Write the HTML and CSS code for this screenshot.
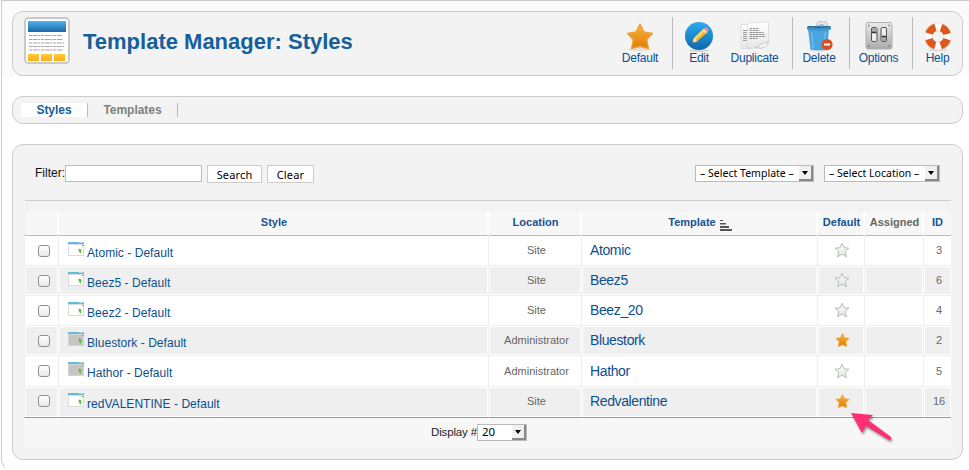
FILE: index.html
```html
<!DOCTYPE html>
<html lang="en">
<head>
<meta charset="utf-8">
<title>Template Manager: Styles</title>
<link rel="stylesheet" href="styles.css">
</head>
<body>
<svg class="defs" width="0" height="0" aria-hidden="true">
  <defs>
    <linearGradient id="gold" x1="0" y1="0" x2="0" y2="1"><stop offset="0" stop-color="#f9b53c"/><stop offset="1" stop-color="#e07c06"/></linearGradient>
    <linearGradient id="blue" x1="0" y1="0" x2="0" y2="1"><stop offset="0" stop-color="#2eaaf0"/><stop offset="1" stop-color="#0c68ab"/></linearGradient>
    <linearGradient id="banner" x1="0" y1="0" x2="0" y2="1"><stop offset="0" stop-color="#52b3f0"/><stop offset="1" stop-color="#1767a5"/></linearGradient>
    <linearGradient id="amber" x1="0" y1="0" x2="0" y2="1"><stop offset="0" stop-color="#fdcb3c"/><stop offset="1" stop-color="#fbae17"/></linearGradient>
    <linearGradient id="steel" x1="0" y1="0" x2="0" y2="1"><stop offset="0" stop-color="#ececec"/><stop offset="1" stop-color="#a9a9a9"/></linearGradient>
    <linearGradient id="page" x1="0" y1="0" x2="0" y2="1"><stop offset="0" stop-color="#ffffff"/><stop offset="1" stop-color="#e6e6e6"/></linearGradient>
    <linearGradient id="pale" x1="0" y1="0" x2="0" y2="1"><stop offset="0" stop-color="#ffffff"/><stop offset="1" stop-color="#dfe5de"/></linearGradient>
    <symbol id="star" viewBox="0 0 16 16"><path d="M8 1.200 10 5.700 15 6.200 11.200 9.400 12.400 14.800 8 12.100 3.600 14.800 4.800 9.400 1 6.200 6 5.700Z" fill="url(#pale)" stroke="#b3c2b1" stroke-width="1"/></symbol>
    <symbol id="star-on" viewBox="0 0 16 16"><path d="M8.500 1.700 10.500 5.800 15 6.400 11.800 9.600 12.500 14.400 8.500 12.800 4.500 14.400 5.200 9.600 2 6.400 6.500 5.800Z" fill="url(#gold)" stroke="#f2a22e" stroke-width=".9" stroke-linejoin="round"/></symbol>
    <symbol id="site" viewBox="0 0 16 14"><path d="M0 0h16v14H0z" fill="#dcdcdc"/><path d="M1 3h14v10H1z" fill="#fff"/><path d="M0 0h16v2H0z" fill="#63bbdc"/><path d="M11 0h4v1h-4z" fill="#b2dff0"/><path d="m10.500 6.400 1.400.7 1 .2.800 1.400-1 1 .7 2-1.500-.8-1.200-2.200Z" fill="#57bb2f"/><path d="M14 3h2v1h-2z" fill="#79be60"/></symbol>
    <symbol id="admin" viewBox="0 0 16 14"><path d="M0 0h16v14H0z" fill="#d5d5d5"/><path d="M1 3h14v10H1z" fill="#c5c5c5"/><path d="M0 0h16v2H0z" fill="#63bbdc"/><path d="M11 0h4v1h-4z" fill="#b2dff0"/><path d="m10.500 6.400 1.400.7 1 .2.800 1.400-1 1 .7 2-1.500-.8-1.200-2.200Z" fill="#57bb2f"/><path d="M14 3h2v1h-2z" fill="#79be60"/></symbol>
  </defs>
</svg>
<div class="frame">
  <header class="top">
    <div class="panel titlebar">
      <svg class="logo" width="46" height="48" viewBox="0 0 46 48"><rect x="1" y="1" width="44" height="45" rx="3.500" fill="#fff" stroke="#c9c9c9" stroke-width="2"/><path d="M4 4h38v11H4z" fill="url(#banner)"/><path d="M5 18.500h33M5 22.500h34M5 26h36M5 29.500h35M5 33h34" stroke="#a5a5a5" stroke-width="1.100" stroke-dasharray="3 .7 5 .6 2 .8"/><path d="M4 37h11v7H4zM17 37h11v7H17zM30 37h11v7H30z" fill="url(#amber)"/></svg>
      <h1>Template Manager: Styles</h1>
      <nav class="toolbar">
        <a class="tool t-default"><svg width="32" height="32" viewBox="0 0 32 32"><ellipse cx="16" cy="28.500" rx="12" ry="1.500" fill="#ddd"/><path d="M16 3 20 11 28.500 12.500 22.800 18.500 24.500 27.500 16 25.500 7.500 27.500 9.200 18.500 3.500 12.500 12 11Z" fill="url(#gold)" stroke="#eda13b" stroke-width="1.300" stroke-linejoin="round"/></svg><span>Default</span></a>
        <a class="tool sep t-edit"><svg width="32" height="32" viewBox="0 0 32 32"><ellipse cx="16" cy="29.500" rx="10" ry="1.500" fill="#d5d5d5"/><circle cx="16" cy="15" r="14" fill="url(#blue)"/><path d="m9 22 2-5L20.500 8l3.500 3.500L14 20.500Z" fill="#fcb42a"/><path d="m11 17 9.500-9 1.500 1.500L12.200 19Z" fill="#ffdc62"/><path d="m19.500 9 1.500-1.500 3.500 3.500L23 12.500Z" fill="#ddd"/><path d="m21 7.500 1.500-1.200Q24 6 25 7.500t.5 2.500L24.500 11Z" fill="#ef8f79"/><path d="m9 22 2-5 3 3.500Z" fill="#f2dfb9"/><path d="m9 22 .8-2 1.200 1.200Z" fill="#333"/></svg><span>Edit</span></a>
        <a class="tool t-dup"><svg width="32" height="32" viewBox="0 0 32 32"><path d="M2 3.500h12v24H2z" fill="url(#page)" stroke="#ddd"/><path d="M4 9.500h5M4 11.500h4M4 13.500h5M4 15.500h4M4 17.500h5M4 19.500h4" stroke="#999"/><path d="m8.500 2 21-1v21l-7 5H7.500Z" fill="url(#page)" stroke="#d7d7d7" stroke-width=".7"/><path d="m16 26.500 6-3 7.500-3q-2 6-7 6.500Z" fill="#fafafa" stroke="#bbb" stroke-width=".8"/><path d="M10.500 7.500h9M10.500 9.500h10M10.500 11.500h14M10.500 13.500h15M10.500 15.500h16M10.500 17.500h8" stroke="#929292" stroke-dasharray="3 .6 2 .4"/></svg><span>Duplicate</span></a>
        <a class="tool sep t-delete"><svg width="32" height="32" viewBox="0 0 32 32"><path d="M14 5q-1-4 3-4.500 8-2 7 5Z" fill="#e6e6e6" stroke="#aaa" stroke-width=".7"/><path d="m16 5 3-2 3 3" fill="none" stroke="#999"/><ellipse cx="16" cy="29" rx="10" ry="1.500" fill="#d5d5d5"/><path d="M5 8h21l-2 20.500q-8 1.500-16.500 0Z" fill="#4aa5df"/><path d="m8.500 11 1.500 16M22.500 11l-1.500 16" stroke="#65b7e9" stroke-width="2"/><path d="M4 5.500q12-1.500 24 0v3q-12 2-24 0Z" fill="#3f93ca"/><path d="M5 5.500q11 2 22 0" fill="none" stroke="#255e86"/><circle cx="24" cy="23.500" r="5.600" fill="#dd4c1e"/><path d="M21 22.500h6v2h-6z" fill="#fff"/></svg><span>Delete</span></a>
        <a class="tool sep t-options"><svg width="32" height="32" viewBox="0 0 32 32"><rect x="3" y="1.500" width="26" height="26.500" rx="2" fill="url(#steel)" stroke="#b0b0b0"/><path d="M5 4.500h1.500M25.500 4.500H27M5 25h1.500M25.500 25H27" stroke="#777" stroke-width="1.500"/><rect x="8.500" y="6.500" width="5.500" height="14" rx="1.500" fill="#eee" stroke="#555"/><rect x="18" y="6.500" width="5.500" height="14" rx="1.500" fill="#eee" stroke="#555"/><path d="M9 7h4.500v4H9zM18.500 16H23v4h-4.500z" fill="#aaa"/><path d="M9 11.500h4.500M18.500 15.500H23" stroke="#333" stroke-width="1.300"/></svg><span>Options</span></a>
        <a class="tool sep t-help"><svg width="32" height="32" viewBox="0 0 32 32"><ellipse cx="16" cy="29" rx="10" ry="1.200" fill="#d9d9d9"/><circle cx="16" cy="15.500" r="9.500" fill="none" stroke="#fff" stroke-width="8"/><circle cx="16" cy="15.500" r="9.500" fill="none" stroke="#df5719" stroke-width="8" stroke-dasharray="9.300 5.620" stroke-dashoffset="-2.800"/><circle cx="16" cy="15.500" r="13.400" fill="none" stroke="#dedede" stroke-width=".6"/><circle cx="16" cy="15.500" r="5.400" fill="#f3f3f3" stroke="#d3d3d3" stroke-width=".6"/></svg><span>Help</span></a>
      </nav>
    </div>
  </header>
  <nav class="panel tabs"><a class="tab active">Styles</a><a class="tab">Templates</a></nav>
  <main class="panel content">
    <div class="filters">
      <label for="q">Filter:</label><input id="q" class="query" type="text"><button class="search">Search</button><button class="clear">Clear</button>
      <div class="select s-template"><span>– Select Template –</span><i></i></div>
      <div class="select s-location"><span>– Select Location –</span><i></i></div>
    </div>
    <div class="table">
      <div class="row head"><div></div><div>Style</div><div>Location</div><div><span>Template</span><svg class="sort" width="12" height="11" viewBox="0 0 12 11"><path d="M0 0h3v1H0zM0 3h6v1.500H0zM0 6h9v2H0zM0 9h12v2H0z" fill="#555"/></svg></div><div>Default</div><div class="plain">Assigned</div><div>ID</div></div>
      <div class="row"><div><i class="check"></i></div><div class="name"><svg width="16" height="14"><use href="#site"/></svg><a>Atomic - Default</a></div><div class="loc">Site</div><div class="tpl">Atomic</div><div class="def"><svg width="16" height="16"><use href="#star"/></svg></div><div></div><div class="num">3</div></div>
      <div class="row alt"><div><i class="check"></i></div><div class="name"><svg width="16" height="14"><use href="#site"/></svg><a>Beez5 - Default</a></div><div class="loc">Site</div><div class="tpl">Beez5</div><div class="def"><svg width="16" height="16"><use href="#star"/></svg></div><div></div><div class="num">6</div></div>
      <div class="row"><div><i class="check"></i></div><div class="name"><svg width="16" height="14"><use href="#site"/></svg><a>Beez2 - Default</a></div><div class="loc">Site</div><div class="tpl">Beez_20</div><div class="def"><svg width="16" height="16"><use href="#star"/></svg></div><div></div><div class="num">4</div></div>
      <div class="row alt"><div><i class="check"></i></div><div class="name"><svg width="16" height="14"><use href="#admin"/></svg><a>Bluestork - Default</a></div><div class="loc">Administrator</div><div class="tpl">Bluestork</div><div class="def"><svg width="16" height="16"><use href="#star-on"/></svg></div><div></div><div class="num">2</div></div>
      <div class="row tall"><div><i class="check"></i></div><div class="name"><svg width="16" height="14"><use href="#admin"/></svg><a>Hathor - Default</a></div><div class="loc">Administrator</div><div class="tpl">Hathor</div><div class="def"><svg width="16" height="16"><use href="#star"/></svg></div><div></div><div class="num">5</div></div>
      <div class="row alt last"><div><i class="check"></i></div><div class="name"><svg width="16" height="14"><use href="#site"/></svg><a>redVALENTINE - Default</a></div><div class="loc">Site</div><div class="tpl">Redvalentine</div><div class="def"><svg width="16" height="16"><use href="#star-on"/></svg></div><div></div><div class="num">16</div></div>
      <div class="foot"><span>Display #</span><div class="select s-count"><span>20</span><i></i></div></div>
    </div>
  </main>
</div>
<svg class="pointer" width="48" height="36" viewBox="0 0 48 36"><path d="M3 2 25 4 20 9 43 26Q44 29 41 29L18 15 14 22Z" fill="#ff2f73"/></svg>
</body>
</html>
```
FILE: styles.css
```css
* { box-sizing: border-box; }
body { margin: 0; height: 470px; overflow: hidden; background: #fff; font-family: "Liberation Sans", Arial, sans-serif; font-size: 12px; color: #111; }
.defs { position: absolute; }
svg { display: block; flex: none; }
.frame { margin-left: 1px; height: 471px; border: 1px solid #ccc; border-right: 0; border-bottom-color: transparent; border-bottom-left-radius: 12px; }
.panel { width: 951px; margin-left: 10px; border: 1px solid #ccc; border-radius: 11px; background: #f3f3f3; }
.top { background: #fbfbfb; padding-top: 10px; height: 75px; }
.titlebar { display: flex; height: 65px; padding: 5px 0 0 11px; }
h1 { margin: 12px 0 0 13px; width: 275px; font-size: 22px; line-height: 25px; color: #165f9c; white-space: nowrap; }
.toolbar { display: flex; margin-left: auto; height: 52px; }
.tool { display: flex; flex-direction: column; align-items: center; height: 52px; padding-top: 4px; color: #0b4f91; line-height: 14px; font-size: 12px; letter-spacing: -.25px; }
.tool span { margin-top: -2px; }
.sep { border-left: 1px solid #bbb; }
.t-default { width: 64px; }
.t-edit { width: 53px; }
.t-dup { width: 67px; padding-right: 8px; }
.t-delete { width: 57px; padding-right: 4px; }
.t-options { width: 63px; padding-right: 5px; }
.t-help { width: 50px; }
.tabs { display: flex; height: 28px; margin-top: 20px; padding: 6px 0 0 8px; }
.tab { width: 90px; height: 14px; border-right: 1px solid #bbb; text-align: center; font-size: 12px; letter-spacing: -.05px; line-height: 14px; font-weight: bold; color: #808080; }
.active { width: 67px; background: #fff; color: #165f9c; }
.content { height: 316px; margin-top: 20px; padding: 20px 11px 0; }
.filters { display: flex; height: 36px; width: 926px; border-bottom: 1px solid #ccc; margin-left: 1px; padding-left: 10px; }
label { width: 30px; line-height: 16px; white-space: nowrap; }
.query { width: 137px; height: 17px; border: 1px solid #bbb; padding: 0; background: #fff; }
button { height: 18px; padding: 0; background: #fff; border: 1px solid #ccc; font-family: "Noto Sans", sans-serif; font-size: 11px; line-height: 15px; letter-spacing: .15px; color: #000; }
.search { width: 55px; margin-left: 5px; }
.clear { width: 47px; margin-left: 5px; }
.select { display: flex; align-items: center; height: 17px; background: #fff; border: 1px solid #bbb; font-family: "Noto Sans", sans-serif; font-size: 10.5px; color: #000; padding-left: 4px; white-space: nowrap; }
.select span { margin-top: -2px; letter-spacing: .02px; }
.select i { position: relative; margin-left: auto; width: 14px; height: 15px; background: #f0f0f0; border-right: 2px solid #888; border-bottom: 2px solid #888; flex: none; }
.select i::after { content: ""; position: absolute; left: 3px; top: 5px; border: 3.500px solid transparent; border-top: 4px solid #000; border-bottom: 0; }
.s-template { width: 119px; margin-left: auto; }
.s-location { width: 116px; margin: 0 11px 0 10px; }
.s-count { width: 50px; font-size: 11.5px; }
.table { margin-top: 11px; width: 927px; }
.row { display: grid; grid-template-columns: 35px 430px 93px 236px 47px 59px 27px; height: 30px; }
.row > div { display: flex; align-items: center; justify-content: center; border-right: 1px solid #efefef; border-bottom: 1px solid #efefef; background: #fff; min-width: 0; padding: 0 0 1px 2px; }
.row > div:first-child { border-left: 1px solid #efefef; padding-left: 5px; }
.row > div:last-child { border-right: 0; }
.alt > div { background: #efefef; box-shadow: inset 0 0 0 1px #fff; }
.row.head { height: 24px; }
.head > div { background: #f7f7f7; border-right: 2px solid #fff; border-bottom: 1px solid #bbb; font-weight: bold; font-size: 11px; color: #165394; padding-bottom: 3px; }
.row.head > div:last-child { padding-left: 0; }
.head .plain { color: #666; }
.sort { margin: 6px 0 0 4px; }
.row.tall, .row.last { height: 31px; }
.row.last > div { border-bottom: 1px solid #999; padding-bottom: 3px; }
.check { width: 12px; height: 12px; border: 1px solid #8f8f8f; border-radius: 3px; background: linear-gradient(#fff, #e9e9e9); margin-top: 1px; }
.row > .name { justify-content: flex-start; align-items: flex-start; padding: 6px 0 0 9px; }
.name a { margin: 4px 0 0 3px; line-height: 14px; color: #0b4f91; letter-spacing: .04px; }
.loc, .num { font-size: 11px; color: #666; }
.row > .loc { padding-left: 3px; }
.row > .tpl { justify-content: flex-start; padding-left: 8px; font-size: 14px; letter-spacing: -.38px; color: #0b4f91; }
.row > .num { padding-left: 3px; }
.foot { display: flex; height: 30px; padding: 6px 0 0 407px; background: #f7f7f7; line-height: 17px; color: #222; }
.foot > span { width: 46px; white-space: nowrap; font-size: 11.5px; letter-spacing: -.15px; }
.pointer { position: absolute; left: 848px; top: 411px; filter: drop-shadow(1px 2px 1px rgba(0,0,0,.4)); }
```
